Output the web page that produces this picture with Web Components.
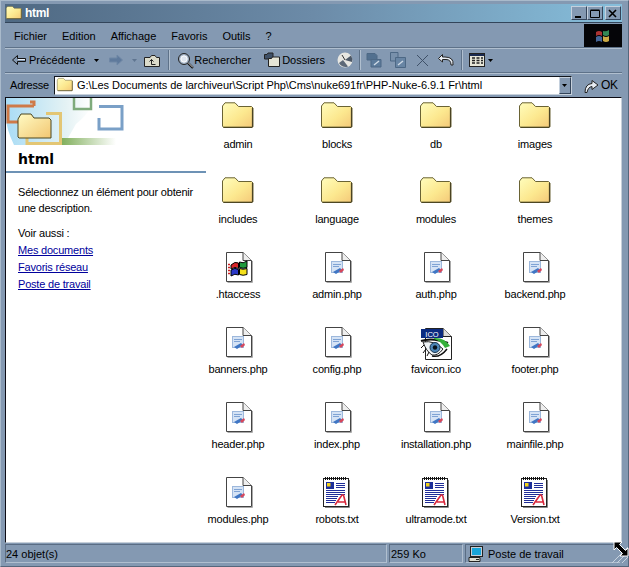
<!DOCTYPE html>
<html lang="fr"><head><meta charset="utf-8"><title>html</title>
<style>
html,body{margin:0;padding:0;background:#8499b2;overflow:hidden}
body{font:11px "Liberation Sans",Roboto,sans-serif;letter-spacing:-.2px;color:#000;width:629px;height:567px}
</style></head><body>
<x-window>
  <x-titlebar slot="title">html</x-titlebar>
  <x-menubar slot="menu"></x-menubar>
  <x-toolbar slot="tools"></x-toolbar>
  <x-address slot="address" path="G:\Les Documents de larchiveur\Script Php\Cms\nuke691fr\PHP-Nuke-6.9.1 Fr\html"></x-address>
  <x-sidebar slot="side" heading="html"></x-sidebar>
  <x-filegrid slot="main"></x-filegrid>
  <x-statusbar slot="status"></x-statusbar>
</x-window>
<script>
const folderSvg=`<defs><linearGradient id="f" x1="0" y1="0" x2="1" y2="1"><stop offset="0" stop-color="#fffdbc"/><stop offset=".55" stop-color="#fce88f"/><stop offset="1" stop-color="#f4c878"/></linearGradient></defs>
<path d="M.5 24V4L3 .8h10L16.500 4.500H29.500L31 6V24.500L30 25.500H1.500Z" fill="url(#f)" stroke="#6a6334"/><path d="M1.500 25.200H30.400V6" fill="none" stroke="#3f3a1c"/>`;
const pageBase=`<path d="M4.500 .5H21L29.500 8.500V29.500H4.500Z" fill="#fff" stroke="#444"/><path d="M21 .5V8.500H29.500" fill="#eee" stroke="#444"/><path d="M5.500 30.500H30.500V9" fill="none" stroke="#aaa"/>`;
const ICONS={
folder:[32,32,folderSvg],
php:[32,32,pageBase+`<rect x="10.500" y="9.500" width="11" height="11" fill="#d5e3f5" stroke="#9db8dc"/><path d="M12 12.500h8M12 14.500h6" stroke="#7fa3d4"/><path d="M12 20l7-4 2 2-6 4z" fill="#3f76c4"/><path d="M18 19l4-3 1 2-3 3z" fill="#d7475b"/>`],
win:[32,32,pageBase+`<path d="M6 12.500h2M6 15.500h2M6 18.500h2M6 21.500h2" stroke="#c22" stroke-width="1.500"/><path d="M9 13Q13 9 16.500 11V16.500Q13 14 9 17Z" fill="#d8262a" stroke="#000"/><path d="M17.500 10Q21 12 25 9V15.500Q21 17 17.500 15.500Z" fill="#209a3c" stroke="#000"/><path d="M9 18Q13 15 16.500 17.500V23Q13 21 9 24Z" fill="#2a38c8" stroke="#000"/><path d="M17.500 16.500Q21 18 25 16.500V22.500Q21 24 17.500 22.500Z" fill="#f4e01a" stroke="#000"/>`],
ico:[32,32,`<path d="M5.500 1.500H23L31.500 9.500V32.500H5.500Z" fill="#fff" stroke="#222"/><path d="M23 1.500V9.500H31.500" fill="#ddd" stroke="#222"/><rect x="1" y="2" width="22" height="9" fill="#0b2a80"/><text x="12" y="9.500" font-family="Liberation Sans,sans-serif" font-size="7.500" fill="#fff" text-anchor="middle" letter-spacing="0">ICO</text><path d="M1 14Q12 10 28 16" fill="none" stroke="#111" stroke-width="2"/><path d="M14 11Q24 10 30 19L25 21Q21 14 14 12Z" fill="#35b03a"/><path d="M3 15Q14 13 23 22Q18 29 12 28Q6 24 3 15Z" fill="#eef3f6" stroke="#222"/><circle cx="15" cy="20.500" r="5" fill="#4d86b8" stroke="#16324c"/><circle cx="15" cy="20.500" r="2.200" fill="#08121c"/><path d="M4 18L1 21M6 22L3 26M9 25L7 29" stroke="#111"/><path d="M12 29Q20 31 27 22" fill="none" stroke="#111" stroke-width="1.500"/>`],
txt:[32,32,`<rect x="2.500" y="1.500" width="25" height="28" fill="#fff" stroke="#222"/><path d="M28.500 3V30.500H4" fill="none" stroke="#888"/><path d="M4.500 0v3M6.500 0v3M8.500 0v3M10.500 0v3M12.500 0v3M14.500 0v3M16.500 0v3M18.500 0v3M20.500 0v3M22.500 0v3M24.500 0v3" stroke="#111"/><rect x="5" y="5" width="8" height="7" fill="#1d2f9a"/><rect x="6" y="6" width="3.500" height="3.500" fill="#f2d21a"/><path d="M15 6.500h9M15 8.500h9M15 10.500h9M5 13.500h19M5 15.500h19M5 17.500h19M5 19.500h12M5 21.500h11M5 23.500h10M5 25.500h9" stroke="#1f2d98"/><path d="M14 28L21 18H22.500L25 28M17 25H24" fill="none" stroke="#d8283c" stroke-width="1.600"/>`],
back:[14,12,`<path d="M.5 6L5.500 1.500V4.500H13.500V7.500H5.500V10.500Z" fill="#8499b2" stroke="#111" stroke-linejoin="round"/><path d="M6 5.500H13" stroke="#e9eef5"/>`],
fwd:[14,12,`<path d="M13.500 6L8 1V4H.5V8H8V11Z" fill="#5f7a9c" stroke="#6f87a5"/>`],
caret:[5,3,`<path d="M0 0H5L2.500 3Z" fill="currentColor"/>`],
up:[16,13,`<path d="M.5 3.500H6L7.500 1.500H11L12.500 3.500H15.500V12.500H.5Z" fill="#dcdccb" stroke="#222"/><path d="M11.500 10.500H7.500V5.500M5.500 7.500L7.500 5.500 9.500 7.500" fill="none" stroke="#222"/>`],
search:[17,17,`<circle cx="7" cy="7" r="5.500" fill="#a3b4c8" stroke="#222"/><circle cx="7" cy="7" r="3.200" fill="#dfe6ef" stroke="#fff"/><path d="M11 11L16 16" stroke="#111" stroke-width="2.400"/><path d="M11 10.500L16 15.500" stroke="#ddd"/>`],
folders:[16,16,`<path d="M.5 2.500H3L4 1H9V7H.5Z" fill="#3f5168" stroke="#222"/><path d="M4.500 6.500H7.500L8.500 5H15.500V14.500H4.500Z" fill="#e5e5d5" stroke="#222"/>`],
history:[16,16,`<circle cx="8" cy="8" r="7.500" fill="#e7e7e2"/><path d="M8 8L14 3.500A7.500 7.500 0 0 1 15 10Z" fill="#4d5968"/><path d="M2 11A7 7 0 0 0 11 14.500L6 8Z" fill="#5d6978"/><path d="M8 8L5 3" stroke="#333"/>`],
move:[16,16,`<path d="M1 1.500H9L11 3.500V8H1Z" fill="#52708f" stroke="#4d6885"/><path d="M5 7.500H15V15H5Z" fill="#5c7b9b" stroke="#4d6885"/><path d="M8 13L13 9" stroke="#cfdae6" stroke-width="1.500"/>`],
copy:[16,16,`<path d="M.5 .5H8V9H.5Z" fill="#7890ab" stroke="#4d6885"/><path d="M5.500 5.500H15.500V15.500H5.500Z" fill="#6885a4" stroke="#4d6885"/><path d="M8 13L13 9" stroke="#cfdae6" stroke-width="1.500"/>`],
del:[13,13,`<path d="M1 1L12 12M12 1L1 12" stroke="#3f5168" stroke-width="1"/>`],
undo:[16,12,`<path d="M15 11Q16 3 7 3H4.500V.5L.5 4.500 4.500 8V5.500H8Q13 5.500 13 11Z" fill="#e8edf3" stroke="#222" stroke-linejoin="round"/>`],
views:[16,14,`<rect x=".5" y=".5" width="15" height="13" fill="#e6e6d8" stroke="#222"/><rect x="1" y="1" width="14" height="2" fill="#1a2a50"/><path d="M3 5h3M3 7.500h3M3 10h3M7.500 5h3M7.500 7.500h3M7.500 10h3M12 5h2M12 7.500h2M12 10h2" stroke="#222" stroke-width="1.300"/>`],
go:[15,16,`<path d="M1 15.500Q1 7 8 6.500V3.500L14 8 8 12.500V9.500Q4 10 3 15.500Z" fill="#e6ebf1" stroke="#222" stroke-linejoin="round"/>`],
pc:[16,16,`<rect x="2.500" y=".5" width="12" height="10" fill="#c5cdd6" stroke="#222"/><rect x="4" y="2" width="9" height="7" fill="#18a4d8"/><path d="M1 11.500H12V15.500H1Z" fill="#dcdcd0" stroke="#222"/><path d="M8 13.500H11" stroke="#222"/>`],
};
class Base extends HTMLElement{
  constructor(){super();this.attachShadow({mode:'open'});}
  render(html){this.shadowRoot.innerHTML=html;}
}
class XIcon extends Base{
  connectedCallback(){
    const [w,h,s]=ICONS[this.getAttribute('name')];
    this.render(`<style>:host{display:inline-flex;flex:none;line-height:0}svg{overflow:visible}</style><svg width="${w}" height="${h}" viewBox="0 0 ${w} ${h}">${s}</svg>`);
  }
}
class XWindow extends Base{
  connectedCallback(){
    this.render(`<style>
    :host{display:flex;flex-direction:column;box-sizing:border-box;width:629px;height:567px;background:#8499b2;padding:3px 6px 3px 4px;border:1px solid;border-color:#a9bacb #55677c #55677c #a9bacb;position:relative}
    .body{display:flex;flex:1;min-height:0;background:#fff;border-top:1px solid #0c0c14;border-left:1px solid #0c0c14;border-right:1px solid #c7d0da;border-bottom:1px solid #c7d0da}
    </style>
    <slot name="title"></slot><slot name="menu"></slot><slot name="tools"></slot><slot name="address"></slot>
    <div class="body"><slot name="side"></slot><slot name="main"></slot></div>
    <slot name="status"></slot>`);
  }
}
class XTitlebar extends Base{
  connectedCallback(){
    const b=(g)=>`<span class="btn">${g}</span>`;
    this.render(`<style>
    :host{display:flex;align-items:center;height:18px;margin-bottom:1px;background:linear-gradient(90deg,#4f6983,#6c8ba8 50%,#86bedb);color:#fff;font:bold 12px "Liberation Sans",sans-serif;border-bottom:1px solid #33455a;padding-left:1px}
    .t{margin-left:3px;flex:1;letter-spacing:-.3px}
    .btn{width:16px;height:14px;background:#8499b2;box-sizing:border-box;border:1px solid;border-color:#c4d0dd #33445a #33445a #c4d0dd;display:flex;align-items:center;justify-content:center;line-height:0}
    .btns{display:flex;margin-right:1px}.btn:last-child{margin-left:2px}
    </style><x-icon name="folder" style="width:32px;height:28px;zoom:.5"></x-icon><span class="t"><slot></slot></span>
    <span class="btns">${b('<svg width="10" height="9"><path d="M1 7H7V9H1Z" fill="#000"/></svg>')}${b('<svg width="10" height="9"><path d="M.5 1.500H9.500V8.500H.5ZM.5 1H9.500" fill="none" stroke="#000"/></svg>')}${b('<svg width="10" height="9"><path d="M1 1L8 8M8 1L1 8" stroke="#000" stroke-width="1.600"/></svg>')}</span>`);
  }
}
class XMenubar extends Base{
  connectedCallback(){
    const items=['Fichier','Edition','Affichage','Favoris','Outils','?'];
    this.render(`<style>
    :host{display:flex;align-items:center;height:23px;border-bottom:1px solid #5e7289;box-shadow:0 1px 0 #b0bfcf;font-size:11px;letter-spacing:0;padding-left:9px}
    span{white-space:nowrap}
    .m{display:flex;flex:1;gap:15px}
    .logo{width:38px;height:23px;background:#050508;display:flex;align-items:center;justify-content:center;flex:none}
    </style><div class="m">${items.map(i=>`<span>${i}</span>`).join('')}</div>
    <div class="logo"><svg width="18" height="16" viewBox="0 0 18 16"><path d="M2 4Q5 2 8 4V8Q5 6 2 8Z" fill="#a33"/><path d="M9 3Q12 4 15 2V7Q12 9 9 7Z" fill="#385"/><path d="M2 9Q5 7 8 9V14Q5 12 2 14Z" fill="#469"/><path d="M9 8Q12 10 15 8V13Q12 15 9 13Z" fill="#ca4"/></svg></div>`);
  }
}
class XToolbar extends Base{
  connectedCallback(){
    this.render(`<style>
    :host{display:flex;align-items:center;height:24px;border-bottom:1px solid #5e7289;box-shadow:0 1px 0 #b0bfcf;padding-left:7px;font-size:11px;letter-spacing:0;white-space:nowrap}
    .sep{width:1px;height:20px;background:#5e7289;box-shadow:1px 0 0 #b0bfcf;flex:none}
    .c{color:#000}.d{color:#5f7590}
    </style>
    <x-icon name="back"></x-icon><span style="margin-left:3px">Précédente</span><x-icon class="c" name="caret" style="margin-left:9px;margin-top:1px"></x-icon>
    <x-icon name="fwd" style="margin-left:10px"></x-icon><x-icon class="d" name="caret" style="margin-left:9px"></x-icon>
    <x-icon name="up" style="margin-left:7px"></x-icon><div class="sep" style="margin-left:8px"></div>
    <x-icon name="search" style="margin-left:8px"></x-icon><span>Rechercher</span>
    <x-icon name="folders" style="margin-left:13px"></x-icon><span style="margin-left:2px">Dossiers</span>
    <x-icon name="history" style="margin-left:12px"></x-icon><div class="sep" style="margin-left:6px"></div>
    <x-icon name="move" style="margin-left:6px"></x-icon><x-icon name="copy" style="margin-left:8px"></x-icon><x-icon name="del" style="margin-left:10px"></x-icon><x-icon name="undo" style="margin-left:9px"></x-icon><div class="sep" style="margin-left:7px"></div>
    <x-icon name="views" style="margin-left:7px"></x-icon><x-icon class="c" name="caret" style="margin-left:3px"></x-icon>`);
  }
}
class XAddress extends Base{
  connectedCallback(){
    this.render(`<style>
    :host{display:flex;align-items:center;height:24px;padding-left:5px;font-size:11px;white-space:nowrap}
    .box{display:flex;align-items:center;width:518px;height:19px;margin-left:5px;background:#fff;border:1px solid;border-color:#11161c #c6d0db #c6d0db #11161c;box-sizing:border-box;position:relative}
    .path{margin-left:4px;letter-spacing:-.05px}
    .dd{position:absolute;right:0;top:0;bottom:0;width:12px;background:#8499b2;border:1px solid;border-color:#c4d0dd #33445a #33445a #c4d0dd;box-sizing:border-box;display:flex;align-items:center;justify-content:center}
    .ok{display:flex;align-items:center;margin-left:12px;gap:2px;font-size:12px}
    </style><span>Adresse</span>
    <div class="box"><x-icon name="folder" style="zoom:.5;width:32px;height:28px;margin-left:4px"></x-icon><span class="path">${this.getAttribute('path')}</span><div class="dd"><x-icon name="caret"></x-icon></div></div>
    <div class="ok"><x-icon name="go"></x-icon><span>OK</span></div>`);
  }
}
class XSidebar extends Base{
  connectedCallback(){
    this.render(`<style>
    :host{display:block;flex:none;width:200px;font-size:11px;line-height:16px}
    .banner{height:47px;overflow:hidden}
    .banner svg{display:block}
    h1{margin:0;font:bold 14px/20px "DejaVu Sans",sans-serif;letter-spacing:0;padding:4px 0 2px 12px;border-bottom:2px solid #6d92b5;height:20px}
    .txt{padding:11px 12px 0}
    p{margin:0;white-space:nowrap}
    a{display:block;color:#00009c;text-decoration:underline;margin-top:1px;white-space:nowrap}
    </style>
    <div class="banner"><svg width="200" height="47" viewBox="0 0 200 47"><defs>
    <linearGradient id="w" x1="0" x2="1"><stop offset="0" stop-color="#a9dcf5"/><stop offset=".7" stop-color="#e4f2f4"/><stop offset="1" stop-color="#fff"/></linearGradient>
    <linearGradient id="g" x1="0" x2="1"><stop offset="0" stop-color="#7fae5a"/><stop offset="1" stop-color="#fff"/></linearGradient>
    <linearGradient id="f" x1="0" y1="0" x2="1" y2="1"><stop offset="0" stop-color="#fffbc4"/><stop offset="1" stop-color="#f2c671"/></linearGradient></defs>
    <path d="M0 0H84Q90 10 70 26L58 47H8Q0 30 0 20Z" fill="url(#w)"/><rect x="55" y="40" width="55" height="7" fill="url(#g)"/>
    <path d="M28 8H2V24H12" fill="none" stroke="#cf7a48" stroke-width="3"/><path d="M24 4H28V8" fill="none" stroke="#cf7a48" stroke-width="3"/>
    <path d="M40 15.500H54.500V45.500H21V38" fill="none" stroke="#e3c674" stroke-width="3"/>
    <path d="M68 0V11H85V0" fill="none" stroke="#7fab7c" stroke-width="2.500"/>
    <path d="M93 8.500H116V31H93V20" fill="none" stroke="#7aa0c7" stroke-width="3"/>
    <path d="M12 39V21L15 16H25L28 20H43L45 22V40H13Z" fill="url(#f)" stroke="#4a4620"/></svg></div>
    <h1>${this.getAttribute('heading')}</h1>
    <div class="txt"><p>Sélectionnez un élément pour obtenir</p><p>une description.</p><p style="margin-top:9px">Voir aussi :</p>
    <a href="#">Mes documents</a><a href="#">Favoris réseau</a><a href="#">Poste de travail</a></div>`);
  }
}
class XFile extends Base{
  connectedCallback(){
    this.render(`<style>
    :host{display:flex;flex-direction:column;align-items:center;width:64px;height:75px;font-size:11px}
    .i{width:32px;height:32px;flex:none}
    .l{margin-top:2px;line-height:16px;white-space:nowrap}
    </style><x-icon class="i" name="${this.getAttribute('icon')}"></x-icon><span class="l"><slot></slot></span>`);
  }
}
class XFilegrid extends Base{
  connectedCallback(){
    const files=[['admin','folder'],['blocks','folder'],['db','folder'],['images','folder'],['includes','folder'],['language','folder'],['modules','folder'],['themes','folder'],['.htaccess','win'],['admin.php','php'],['auth.php','php'],['backend.php','php'],['banners.php','php'],['config.php','php'],['favicon.ico','ico'],['footer.php','php'],['header.php','php'],['index.php','php'],['installation.php','php'],['mainfile.php','php'],['modules.php','php'],['robots.txt','txt'],['ultramode.txt','txt'],['Version.txt','txt']];
    this.render(`<style>:host{display:grid;grid-template-columns:repeat(4,64px);column-gap:35px;grid-auto-rows:75px;padding-top:4px;flex:1;align-content:start}</style>`+files.map(f=>`<x-file icon="${f[1]}">${f[0]}</x-file>`).join(''));
  }
}
class XStatusbar extends Base{
  connectedCallback(){
    this.render(`<style>
    :host{display:flex;height:19px;margin-top:1px;font-size:11px;letter-spacing:0;position:relative;white-space:nowrap}
    .p{display:flex;align-items:center;box-sizing:border-box;border:1px solid;border-color:#5a6d84 #b0bfcf #b0bfcf #5a6d84;margin-right:2px}
    .cur{position:absolute;right:-7px;bottom:0;overflow:visible}
    </style><div class="p" style="width:382px">24 objet(s)</div><div class="p" style="width:74px;padding-left:1px">259 Ko</div>
    <div class="p" style="flex:1;border-right:0;padding-left:2px"><x-icon name="pc"></x-icon><span style="margin-left:4px">Poste de travail</span></div>
    <svg class="cur" width="19" height="22" viewBox="0 0 19 22"><path d="M2 22L18 6M7 22L18 11M12 22L18 16" stroke="#c8d3df"/><path d="M4 1H12L9.500 3.500 15.500 9.500 18 7V15H10L12.500 12.500 6.500 6.500 4 9Z" fill="#000" stroke="#fff"/></svg>`);
  }
}
[['x-icon',XIcon],['x-window',XWindow],['x-titlebar',XTitlebar],['x-menubar',XMenubar],['x-toolbar',XToolbar],['x-address',XAddress],['x-sidebar',XSidebar],['x-file',XFile],['x-filegrid',XFilegrid],['x-statusbar',XStatusbar]].forEach(([n,c])=>customElements.define(n,c));
</script>
</body></html>
